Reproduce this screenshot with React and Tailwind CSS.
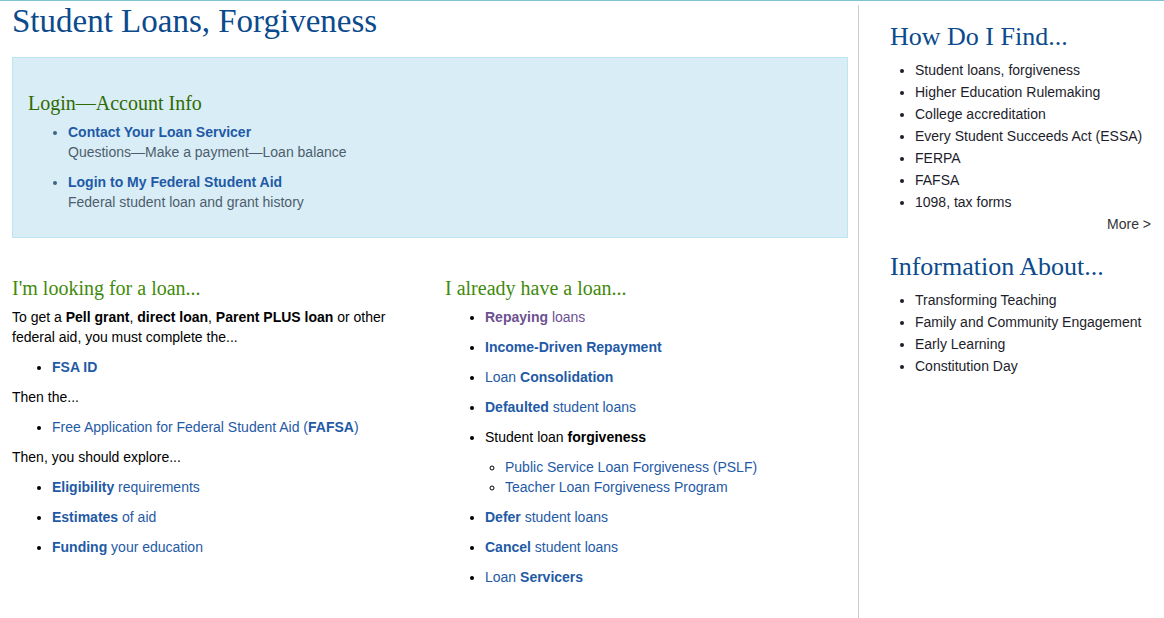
import React from "react";

const serif = { fontFamily: "'Liberation Serif', serif" };

const Link = ({ children, bold }) => (
  <a href="#" className={`text-[#1f5aa6] ${bold ? "font-bold" : ""}`}>
    {children}
  </a>
);

const App = () => {
  const findItems = [
    "Student loans, forgiveness",
    "Higher Education Rulemaking",
    "College accreditation",
    "Every Student Succeeds Act (ESSA)",
    "FERPA",
    "FAFSA",
    "1098, tax forms",
  ];
  const aboutItems = [
    "Transforming Teaching",
    "Family and Community Engagement",
    "Early Learning",
    "Constitution Day",
  ];

  return (
    <div
      className="w-[1164px] h-[618px] overflow-hidden bg-white border-t border-[#7fc2d1] text-[14px] leading-[20px] text-[#222]"
      style={{ fontFamily: "'Liberation Sans', Arial, sans-serif" }}
    >
      <div className="flex h-full">
        {/* Main content */}
        <div className="w-[858px] pl-[12px] pr-[10px]">
          <h1 className="mt-[2px] text-[33px] leading-[36px] text-[#0b4a8c]" style={serif}>
            Student Loans, Forgiveness
          </h1>

          {/* Login box */}
          <div className="mt-[18px] h-[181px] bg-[#d9edf7] border border-[#bde6f0] pt-[33px] pl-[15px]">
            <h2 className="text-[20px] leading-[24px] text-[#2f6b00]" style={serif}>
              Login—Account Info
            </h2>
            <ul className="mt-[7px] pl-[40px] list-disc marker:text-[#3d6485] space-y-[10px]">
              <li>
                <Link bold>Contact Your Loan Servicer</Link>
                <div className="text-[#4d5d6b]">Questions—Make a payment—Loan balance</div>
              </li>
              <li>
                <Link bold>Login to My Federal Student Aid</Link>
                <div className="text-[#4d5d6b]">Federal student loan and grant history</div>
              </li>
            </ul>
          </div>

          <div className="flex mt-[38px]">
            {/* Left column */}
            <div className="w-[433px] text-black">
              <h3 className="text-[20px] leading-[24px] text-[#3f8a0c] mb-[7px]" style={serif}>
                I'm looking for a loan...
              </h3>
              <p className="pr-[40px]">
                To get a <b>Pell grant</b>, <b>direct loan</b>, <b>Parent PLUS loan</b> or other federal aid, you must complete the...
              </p>
              <ul className="list-disc pl-[40px] mt-[10px]">
                <li><Link bold>FSA ID</Link></li>
              </ul>
              <p className="mt-[10px]">Then the...</p>
              <ul className="list-disc pl-[40px] mt-[10px]">
                <li>
                  <Link>Free Application for Federal Student Aid (<b>FAFSA</b>)</Link>
                </li>
              </ul>
              <p className="mt-[10px]">Then, you should explore...</p>
              <ul className="list-disc pl-[40px] mt-[10px] space-y-[10px]">
                <li><Link><b>Eligibility</b> requirements</Link></li>
                <li><Link><b>Estimates</b> of aid</Link></li>
                <li><Link><b>Funding</b> your education</Link></li>
              </ul>
            </div>

            {/* Right column */}
            <div className="flex-1 text-black">
              <h3 className="text-[20px] leading-[24px] text-[#3f8a0c] mb-[7px]" style={serif}>
                I already have a loan...
              </h3>
              <ul className="list-disc pl-[40px] space-y-[10px]">
                <li>
                  <a href="#" className="text-[#6d5192]"><b>Repaying</b> loans</a>
                </li>
                <li><Link bold>Income-Driven Repayment</Link></li>
                <li><Link>Loan <b>Consolidation</b></Link></li>
                <li><Link><b>Defaulted</b> student loans</Link></li>
                <li>
                  Student loan <b>forgiveness</b>
                  <ul className="list-[circle] pl-[20px] mt-[10px]">
                    <li><Link>Public Service Loan Forgiveness (PSLF)</Link></li>
                    <li><Link>Teacher Loan Forgiveness Program</Link></li>
                  </ul>
                </li>
                <li><Link><b>Defer</b> student loans</Link></li>
                <li><Link><b>Cancel</b> student loans</Link></li>
                <li><Link>Loan <b>Servicers</b></Link></li>
              </ul>
            </div>
          </div>
        </div>

        {/* Sidebar */}
        <div className="flex-1 mt-[4px] border-l border-[#cccccc] pl-[31px] pr-[13px] pt-[16px]">
          <h2 className="text-[26px] leading-[32px] text-[#0b4a8c]" style={serif}>
            How Do I Find...
          </h2>
          <ul className="mt-[6px] pl-[25px] list-disc leading-[22px] text-[#1d1d2b]">
            {findItems.map((item) => (
              <li key={item}>
                <a href="#">{item}</a>
              </li>
            ))}
          </ul>
          <div className="text-right leading-[22px] text-[#333]">
            <a href="#">More &gt;</a>
          </div>

          <h2 className="mt-[16px] text-[26px] leading-[32px] text-[#0b4a8c]" style={serif}>
            Information About...
          </h2>
          <ul className="mt-[6px] pl-[25px] list-disc leading-[22px] text-[#1d1d2b]">
            {aboutItems.map((item) => (
              <li key={item}>
                <a href="#">{item}</a>
              </li>
            ))}
          </ul>
        </div>
      </div>
    </div>
  );
};

export default App;
